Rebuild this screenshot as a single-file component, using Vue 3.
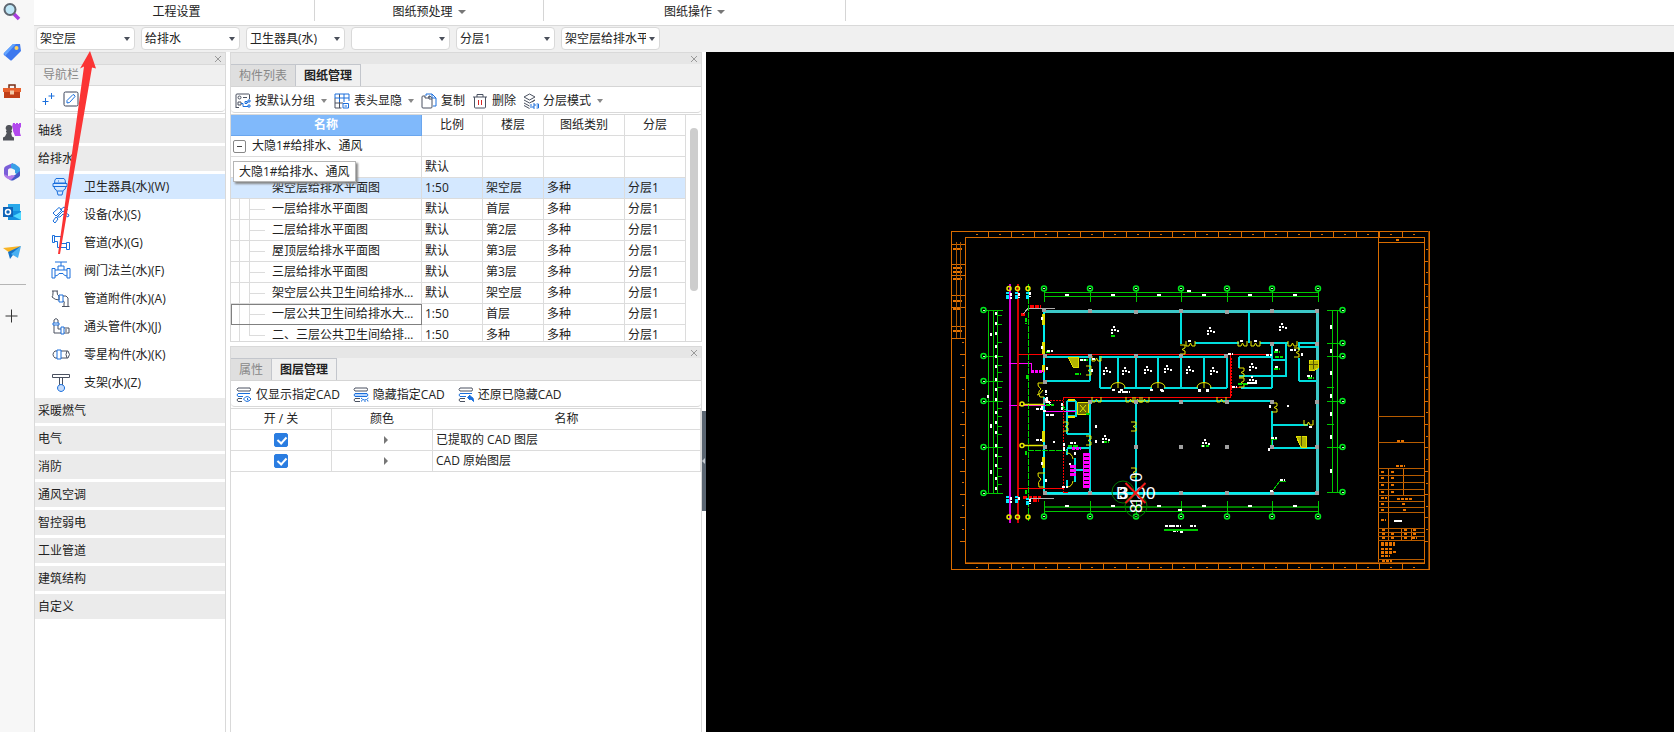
<script setup>
import { ref } from 'vue'

const groups = [
  { name: '工程设置', menu: false, size: 'g1' },
  { name: '图纸预处理', menu: true, size: 'g2' },
  { name: '图纸操作', menu: true, size: 'g3' },
]
const filters = [
  { label: '楼层', value: '架空层' },
  { label: '专业', value: '给排水' },
  { label: '构件类型', value: '卫生器具(水)' },
  { label: '构件', value: '' },
  { label: '分层', value: '分层1' },
  { label: '图纸', value: '架空层给排水平面图' },
]

const B = '#1a6fdc'
const K = '#4a5160'
const navIcons = {
  toilet: [['M5 1.500h8q1.500 1 1.500 4.500h-11Q3.500 2.500 5 1.500zM2 6.500h14v3H2zM3 9.500q0 3 3.500 4.500h5q3.500-1.500 3.500-4.500M6 14l1 4h4l1-4', B], ['M7 4h1', B]],
  device: [['M2 8l6-5.500 3 2.500-6 6zM6 12l6-6 6 4-1 2-5-3-3 3zM2 16l3-4 2 2-3 4zM9 5l4-3 4 3', B]],
  pipe: [['M1.500 2.500h2v7h-2zM3.500 3.500h6.500v7h5.500M3.500 8.500h3v6h9M15.500 9.500h3v7h-3z', B]],
  valve: [['M4 1h12M10 1v4M7 5h6v4H7zM1 7.500h3v9.500H1zM16 7.500h3V17h-3zM4 9h3M13 9h3M4 15q3 0 4-2.500h4q1 2.500 4 2.500', B]],
  fitting: [['M1 2h6M2 2v2q0 3-1 4 3 3 7 3V7Q6 7 6 2M12 7h3q3 1 2 6v4M12 12q2 0 1 3v2M11 17.500h7.500', K], ['M8 6h4v7H8z', B]],
  elbow: [['M3 6V3q2-3 4 0v3M3 8v8h7M7 8v4h3M13 11h5v5h-5M15 12v3', K], ['M2 6h6v2H2zM10 10h3v7h-3z', B]],
  part: [['M6 6H4q-4 3.500 0 7h2M10 6h7q3 3.500 0 7h-7M16 6q-2 3.500 0 7', K], ['M6 5h4v9H6z', B]],
  bracket: [['M1.500 1.500h17v3h-17zM8.500 4.500v8M11.500 4.500v8', K], ['M10 11.500a3.500 3.500 0 1 0 .1 0z', B, '#c6dcfb']],
}
const navItems = [
  ['toilet', '卫生器具(水)(W)'], ['device', '设备(水)(S)'], ['pipe', '管道(水)(G)'], ['valve', '阀门法兰(水)(F)'],
  ['fitting', '管道附件(水)(A)'], ['elbow', '通头管件(水)(J)'], ['part', '零星构件(水)(K)'], ['bracket', '支架(水)(Z)'],
]
const navTop = ['轴线', '给排水']
const navRest = ['采暖燃气', '电气', '消防', '通风空调', '智控弱电', '工业管道', '建筑结构', '自定义']

const toolIcons = {
  group: [['M1 15V2q0-1 1-1h11.500q1 0 1 1v4M1 14.500h3', K], ['M3 4.500a1.500 1.500 0 1 0 3 0a1.500 1.500 0 1 0-3 0M8 4.500h4M3 9h3v3H3z', K], ['M6 10.500h2v3h5M10 8.500h2v2h-2zM13 7h2v2h-2zM13 12h2v2h-2zM12 9.500h1', B]],
  columns: [['M1 15V5M5.500 15V1M1 10h8M1 15h6.500', K], ['M1 1h14v4H1zM10 1v8M15 5v3M5.500 5v4', B], ['M9 10.500h5.500v4.500H9zM10.500 13h2.500', B]],
  copy: [['M5 3V1h6l4 4v8h-3', B], ['M11 1v4h4', B], ['M1 4q0-1 1-1h2v2h4V3h1l2 2.500V14q0 1-1 1H2q-1 0-1-1zM8 3v3h3', K]],
  trash: [['M1 4h14M5 4V1.500h6V4M2.500 4v10q0 1 1 1h9q1 0 1-1V4', K], ['M6.500 7v5M9.500 7v5', '#d62828']],
  layers: [['M1 4l5.500-3L12 4 6.500 7zM1 7l5.500 3L12 7M1 10l5.500 3M1 12.500l5.500 3M9 9l3-2', K], ['M8 11v4M10 11h2v2h-2v2h2M13.500 11h2v4h-2M13.500 13h2', B]],
  show: [['M2 1h12q1 1.500 0 3H2Q0 2.500 2 1zM6 14.500H2q-2-1.500 0-3h4', K], ['M7 9.500H2Q0 8 2 6.500h12', B], ['M7.500 12q3.500-5 7.500 0-4 5-7.500 0zM11.500 11v2h1', B]],
  hide: [['M2 1h12q1 1.500 0 3H2Q0 2.500 2 1zM7 14.500H2q-2-1.500 0-3h5', K], ['M2 6.500h12q2 1.500 0 3H2Q0 8 2 6.500z', B, '#b9d5fb'], ['M8 11q3.500 4 7.500 0M9 13l-.500 1.500M12 13.500V15M14.500 13l.500 1.500', B]],
  restore: [['M2 1h12q1 1.500 0 3H2Q0 2.500 2 1zM7 14.500H2q-2-1.500 0-3h5', K], ['M14 6.500H2Q0 8 2 9.500h6', B], ['M9.500 10.500L12 8v1.500q4 .500 3.500 5-1.500-2.500-3.500-2.500V13z', B, B]],
}
const drawingTools = [
  { icon: 'group', label: '按默认分组', menu: true },
  { icon: 'columns', label: '表头显隐', menu: true },
  { icon: 'copy', label: '复制' },
  { icon: 'trash', label: '删除' },
  { icon: 'layers', label: '分层模式', menu: true },
]
const layerTools = [
  { icon: 'show', label: '仅显示指定CAD' },
  { icon: 'hide', label: '隐藏指定CAD' },
  { icon: 'restore', label: '还原已隐藏CAD' },
]

const drawings = [
  ['架空层给排水平面图', '1:50', '架空层', '多种', '分层1'],
  ['一层给排水平面图', '默认', '首层', '多种', '分层1'],
  ['二层给排水平面图', '默认', '第2层', '多种', '分层1'],
  ['屋顶层给排水平面图', '默认', '第3层', '多种', '分层1'],
  ['三层给排水平面图', '默认', '第3层', '多种', '分层1'],
  ['架空层公共卫生间给排水大样图', '默认', '架空层', '多种', '分层1'],
  ['一层公共卫生间给排水大样图', '1:50', '首层', '多种', '分层1'],
  ['二、三层公共卫生间给排水大样图', '1:50', '多种', '多种', '分层1'],
]
const layers = ref([
  { name: '已提取的 CAD 图层', on: true },
  { name: 'CAD 原始图层', on: true },
])

// ---- CAD plan ----
const range = (n, f) => Array.from({ length: n }, (_, i) => f(i))
const axisX = [1044, 1090, 1136, 1181, 1227, 1272, 1318]
const axisLeft = [310, 356, 381, 401, 447, 493]
const axisRight = [310, 343, 356, 401, 447, 492]
const frameTicks =
  range(19, i => `M${988.5 + 23 * i} 231v6M${988.5 + 23 * i} 564v6`).join('') +
  range(13, i => `M1424 ${Math.round(260.5 + 23.35 * i)}h6`).join('') +
  range(9, i => `M960 ${Math.round(354 + 23.35 * i)}h5`).join('')
const frameMarks =
  range(20, i => `M${976 + 23 * i} 234.500h2M${976 + 23 * i} 567h2`).join('') +
  range(13, i => `M1426 ${Math.round(249 + 23.35 * i)}h2`).join('') +
  range(9, i => `M962 ${Math.round(342 + 23.35 * i)}h2`).join('')
const titleRows = [416, 442, 468, 475, 482, 489, 495, 501, 507, 512, 528, 532, 536, 540, 559]
const titleBlock = titleRows.map(y => `M1378 ${y}.500h46`).join('')
const sideTable = [244, 264, 275, 295, 307, 326, 338].map(y => `M951 ${y}.500h14`).join('')
const axes =
  axisX.map(x => `M${x} 291v11M${x} 501v14`).join('') +
  axisLeft.map(y => `M986 ${y}h17`).join('') +
  axisRight.map(y => `M1327 ${y}h13`).join('') +
  [315, 324, 342, 365, 372, 387, 408, 416, 426, 434, 456, 468, 476, 484].map(y => `M997 ${y}.500h5`).join('') +
  'M1327 387h7M1327 424h7'
const bubbles = [
  ...axisX.flatMap(x => [[x, 288.5], [x, 516.5]]),
  ...axisLeft.map(y => [983.5, y]),
  ...axisRight.map(y => [1342.5, y]),
]
const pipeBubbles = [1009, 1017.5, 1028].flatMap(x => [[x, 288.5], [x, 517]]).concat([[1022, 404], [1022, 445.5]])
const dims =
  axisX.slice(0, 6).map(x => `M${x + 21} 295h4M${x + 21} 505.500h4`).join('') +
  range(17, i => `M996 ${312 + i * 11 - (i % 3)}v3`).join('') +
  [325, 349, 371, 394, 412, 435, 469].map(y => `M1331 ${y}v4`).join('') +
  'M991 333v3M988 395v3M991 424v4M991 470v4M1187 291h4M1178 510h4'
const walls =
  'M1044 356.500h46M1090 356v25M1044 381h46' +
  'M1099 357h128M1100 357v31M1118 357v26M1136 357v31M1158 357v26M1181 357v31M1204 357v26M1227 357v31' +
  'M1100 388h11M1124 388h28M1164 388h34M1210 388h17' +
  'M1181 311v33M1195 343h44M1260 343h28M1298 343h20M1249 311v32' +
  'M1272 343v45M1286 343v33M1272 359.500h14M1239 375.500h48M1241 388h31M1239 356.500h33M1239 357v11' +
  'M1299 343v7M1299 358v23M1299 381h18M1299 347h19' +
  'M1090 401h182M1090 401v92M1135.500 401v92M1067 401v33M1067 434h23M1067 401h9M1067 416h10M1076 401v15M1067 411h9' +
  'M1067 447.500h23M1075 458v24M1067 449v6M1067 480v7M1075 470h15' +
  'M1272 411v36M1272 424.500h36M1272 447.500h45'
const columns = [
  [1044, 310], [1090, 311], [1136, 312], [1181, 311], [1227, 312], [1272, 311], [1317, 311],
  [1045, 356], [1090, 356], [1136, 356], [1181, 356], [1226, 356], [1272, 344], [1317, 344], [1045, 382],
  [1045, 401], [1090, 402], [1136, 402], [1181, 402], [1227, 402], [1272, 402], [1317, 402],
  [1045, 447], [1136, 447], [1181, 447], [1227, 447], [1272, 447], [1317, 447],
  [1045, 493], [1090, 493], [1181, 493], [1227, 493], [1272, 493], [1317, 493],
]
const doorH = (x, y) => `M${x} ${y - 2}v5h3l1.500-3 1.500 3h3v-5`
const doorV = (x, y) => `M${x} ${y}h5v3l-3 1.500 3 1.500v3h-5`
const doors =
  [[1186, 343], [1238, 343], [1251, 343], [1288, 343], [1092, 399], [1126, 399], [1133, 399], [1140, 399], [1217, 399], [1304, 422], [1092, 358]].map(d => doorH(...d)).join('') +
  [[1180, 345], [1086, 366], [1063, 422], [1086, 436], [1131, 422], [1131, 468], [1272, 403], [1294, 348], [1239, 368], [1239, 378]].map(d => doorV(...d)).join('') +
  'M1045 383h-7q-1 3 3 6-4 3-1 8h4M1045 473h-7q-1 4 3 6-4 3-2 8h5M1043 390q-3 5-6 5' +
  [1118, 1158, 1204].map(x => `M${x - 7} 388q0-5 7-5.500q7 .500 7 5.500M${x} 382v6`).join('') +
  'M1067 453q5 0 6 6M1067 487q5 0 6-6'
const rooms = [
  [1113, 330], [1209, 331], [1281, 327], [1105, 371], [1124, 371], [1146, 370], [1166, 369], [1188, 370], [1212, 371],
  [1251, 367], [1251, 380], [1104, 439], [1204, 443],
]
const roomText = rooms.map(([x, y]) => `M${x} ${y - 3}h3M${x - 2} ${y}h5M${x - 2} ${y + 2.5}h3M${x + 4} ${y + 1}h1.500`).join('')
const notes =
  'M1042 317v4M1042 346v4M1047 351h6M1047 367v4M1046 390v5M1080 360h6M1092 359h4M1092 369v3M1112 390h3M1120 390h3M1150 390h3M1160 390h3M1198 390h3M1206 390h3' +
  'M1188 341h3M1240 341h4M1254 341h4M1290 350h6M1302 353v4M1307 376h5M1266 355h6M1228 354h5M1232 387h5M1247 383h10M1275 350h4M1275 367h4' +
  'M1062 403v7M1036 409h7M1046 415h8M1036 440h6M1053 442h2M1064 443v8M1070 443h6M1069 464h2M1075 452v4M1062 487h6M1042 462v3M1046 479v4M1096 425v3M1096 440v3' +
  'M1047 397v6M1042 406v4M1043 411h4M1045 399l6 5M1118 392h12M1161 391h3M1198 391h3M1206 391h3M1270 405v4M1287 406h2M1309 427h4M1271 438h6M1269 448v3M1280 480h5M1270 491h4M1165 526h16M1190 526h6M1173 531h5M1180 532h4'
const greenNotes =
  'M1111 336h5M1103 442h6M1201 446h8M1075 374h6M1080 360h8M1274 352h6M1274 369h6M1308 378h6M1046 352h4M1026 318v6M1027 375v5M1026 451v5M1026 490v5M1275 357h8M1046 405h8M1068 446h10M1238 384h10M1062 405l3 5M1086 414h4'
const orangeNotes =
  'M953 249h9M953 268h9M953 272h9M953 279h9M953 301h9M953 309h8M953 331h9M1396 240h4M1397 441h8M1396 466h9' +
  'M1381 472h4M1391 472h4M1381 478h4M1391 478h4M1381 485h4M1391 485h4M1381 492h4M1391 492h4M1381 498h6M1397 499h15M1381 504h4M1402 504h4M1381 510h4M1403 510h3M1381 520h5' +
  'M1382 530h4M1404 530h4M1413 530h4M1382 534h4M1391 534h3M1404 534h4M1413 534h4M1382 538h4M1391 538h3M1404 538h4M1412 538h5' +
  'M1381 543h14M1381 545h14M1381 549h12M1381 552h15M1381 553h12M1381 556h9M1382 561h10'
</script>

<template>
  <div class="app">
    <aside class="dock">
      <button class="dock-btn" aria-label="搜索">
        <svg viewBox="0 0 18 18"><path d="M11 11l5 5" stroke="#a93de0" stroke-width="3.500" /><circle cx="7" cy="6.500" r="5.500" fill="#bde6f7" stroke="#5d6670" stroke-width="2" /></svg>
      </button>
      <button class="dock-btn" aria-label="购物">
        <svg viewBox="0 0 18 18"><path d="M10 1h7l1 7-9 9q-1 1-2 0L1 12q-1-1 0-2z" fill="#3d78ee" /><path d="M1 10l9-9h3L2 13z" fill="#62a4ff" /><circle cx="13.500" cy="5" r="2" fill="#ffd25c" /></svg>
      </button>
      <button class="dock-btn" aria-label="工具">
        <svg viewBox="0 0 18 18"><path d="M6 5V2h6v3" fill="none" stroke="#7a2d14" stroke-width="1.500" /><path d="M0 5h18v4H0z" fill="#e8602c" /><path d="M1 9h16v6H1z" fill="#c13f18" /><path d="M7 7.500h4v4H7z" fill="#f2c9a8" /></svg>
      </button>
      <button class="dock-btn" aria-label="游戏">
        <svg viewBox="0 0 18 18"><path d="M10 0h2v1h1V0h2v1h1V0h2v4l-1 1v5l1 3h-6l-2-5V5l-1-1z" fill="#b348ee" /><path d="M6 2a3 3 0 0 1 2 5.500H9v2H8l1 4 2 1v3H0v-3l2-1 2-4H3v-2h1A3 3 0 0 1 6 2z" fill="#50535a" /></svg>
      </button>
      <button class="dock-btn" aria-label="Microsoft 365">
        <svg viewBox="0 0 18 18"><path d="M10 0L3 3Q1 4 1 6v6l4 2V7q0-2 5-2z" fill="#7a5fd8" /><path d="M8 1q2-1 4 0l4 3q1 1 1 2v7l-5-3V7L8 5z" fill="#3aa0e8" /><path d="M17 8v4q0 1-1 2l-5 3q-2 1-4 0l-2-2 7-3z" fill="#4458c8" /><path d="M1 11l4 2q2 0 4-1l3 1-4 4Q1 15 1 11z" fill="#b17bea" /></svg>
      </button>
      <button class="dock-btn" aria-label="Outlook">
        <svg viewBox="0 0 18 18"><path d="M5 1h12v10H5z" fill="#28a8ea" /><path d="M5 8h13v9H5z" fill="#1490df" /><path d="M10 13l8-4v8z" fill="#50d9ff" /><path d="M0 4h10v10H0z" fill="#0f64b8" /><circle cx="5" cy="9" r="2.500" fill="none" stroke="#fff" stroke-width="1.500" /></svg>
      </button>
      <button class="dock-btn" aria-label="发送">
        <svg viewBox="0 0 18 18"><path d="M0 5l18-2-11 7z" fill="#f8b425" /><path d="M18 3L5 9l2 7 3-4z" fill="#1673c8" /><path d="M18 3l-3 12-7-4z" fill="#49b0f2" /></svg>
      </button>
      <hr class="dock-line">
      <button class="dock-btn" aria-label="添加"><svg viewBox="0 0 18 18"><path d="M8.500 2.500v13M2.500 9h12" stroke="#333" /></svg></button>
    </aside>

    <div class="work">
      <header class="ribbon">
        <button v-for="g in groups" :key="g.name" class="ribbon-group" :class="g.size">{{ g.name }}<i v-if="g.menu" class="caret big" /></button>
      </header>
      <div class="filters">
        <label v-for="f in filters" :key="f.label" class="filter">
          <select :aria-label="f.label"><option>{{ f.value }}</option></select>
          <i class="caret" />
        </label>
      </div>

      <div class="main">
        <nav class="panel nav">
          <div class="strip"><button class="close" aria-label="关闭"><svg viewBox="0 0 8 8"><path d="M1 1l6 6M7 1L1 7" /></svg></button></div>
          <h2 class="nav-title">导航栏</h2>
          <div class="bar nav-bar">
            <button aria-label="新建"><svg class="ic" viewBox="0 0 16 16" fill="none" stroke="#1a6fdc"><path d="M10.500 2v6M7.500 5h6M4.500 7v7M1.500 10.500h6" /></svg></button>
            <button aria-label="编辑"><svg class="ic" viewBox="0 0 16 16" fill="none"><rect x="1" y="1" width="14" height="14" rx="1.500" stroke="#3a4358" /><path d="M4 12v-2.500L10 3.500q1.500 0 2 2L6.500 11.500z" stroke="#1a6fdc" /></svg></button>
          </div>
          <div class="nav-list">
            <button v-for="n in navTop" :key="n" class="cat">{{ n }}</button>
            <button v-for="([icon, label], i) in navItems" :key="label" class="item" :class="{ sel: i === 0 }">
              <svg class="nav-ic" viewBox="0 0 20 19"><path v-for="(p, k) in navIcons[icon]" :key="k" :d="p[0]" :stroke="p[1]" :fill="p[2] || 'none'" /></svg>
              {{ label }}
            </button>
            <button v-for="n in navRest" :key="n" class="cat">{{ n }}</button>
          </div>
        </nav>

        <div class="middle">
          <section class="panel drawings">
            <div class="strip"><button class="close" aria-label="关闭"><svg viewBox="0 0 8 8"><path d="M1 1l6 6M7 1L1 7" /></svg></button></div>
            <div class="tabs"><button>构件列表</button><button class="on">图纸管理</button></div>
            <div class="bar tool-bar">
              <button v-for="t in drawingTools" :key="t.label" class="tool">
                <svg class="ic" viewBox="0 0 16 16"><path v-for="(p, k) in toolIcons[t.icon]" :key="k" :d="p[0]" :stroke="p[1]" :fill="p[2] || 'none'" /></svg>
                {{ t.label }}<i v-if="t.menu" class="caret pale" />
              </button>
            </div>
            <div class="sheet">
              <table class="grid">
                <colgroup><col class="c-name"><col class="c-ratio"><col class="c-floor"><col class="c-kind"><col class="c-layer"></colgroup>
                <thead><tr><th class="active">名称</th><th>比例</th><th>楼层</th><th>图纸类别</th><th>分层</th></tr></thead>
                <tbody>
                  <tr>
                    <td class="root"><div class="node"><button class="fold" aria-label="折叠"><i /></button>大隐1#给排水、通风</div></td><td /><td /><td /><td />
                  </tr>
                  <tr>
                    <td class="branch"><div class="node"><button class="fold" aria-label="折叠"><i /></button></div><span class="tip" role="tooltip">大隐1#给排水、通风</span></td>
                    <td>默认</td><td /><td /><td />
                  </tr>
                  <tr v-for="(d, i) in drawings" :key="d[0]" :class="{ sel: i === 0, focus: i === 6 }">
                    <td class="leaf" :class="{ last: i === 7 }">{{ d[0] }}</td><td v-for="k in 4" :key="k">{{ d[k] }}</td>
                  </tr>
                </tbody>
              </table>
              <div class="scroll"><div class="thumb" /></div>
            </div>
          </section>

          <section class="panel layers">
            <div class="strip"><button class="close" aria-label="关闭"><svg viewBox="0 0 8 8"><path d="M1 1l6 6M7 1L1 7" /></svg></button></div>
            <div class="tabs"><button>属性</button><button class="on">图层管理</button></div>
            <div class="bar tool-bar bar-wide">
              <button v-for="t in layerTools" :key="t.label" class="tool">
                <svg class="ic" viewBox="0 0 16 16"><path v-for="(p, k) in toolIcons[t.icon]" :key="k" :d="p[0]" :stroke="p[1]" :fill="p[2] || 'none'" /></svg>
                {{ t.label }}
              </button>
            </div>
            <div class="layer-sheet">
              <table class="grid">
                <colgroup><col class="c-on"><col class="c-color"><col></colgroup>
                <thead><tr><th>开 / 关</th><th>颜色</th><th>名称</th></tr></thead>
                <tbody>
                  <tr v-for="l in layers" :key="l.name">
                    <td class="mid"><input v-model="l.on" type="checkbox" :aria-label="l.name"></td>
                    <td class="mid"><i class="expander" /></td>
                    <td>{{ l.name }}</td>
                  </tr>
                </tbody>
              </table>
            </div>
          </section>
        </div>

        <div class="splitter"><button class="grip" aria-label="收起面板"><i /></button></div>

        <main class="canvas">
          <svg class="plan" viewBox="940 220 500 360" fill="none" shape-rendering="crispEdges">
            <g stroke="#d96c00">
              <path d="M951.500 231.500h478v338h-478z" />
              <path d="M965.500 237.500h459v326h-459z" />
              <path :d="frameTicks" />
              <path d="M1378.500 231v332M1378 242.500h46M1388.500 468v72M1403.500 468v27M1401.500 528v12M1411.500 528v12" />
              <path :d="titleBlock" stroke="#b85c00" />
              <path :d="sideTable" />
              <path d="M956.500 242v96M960.500 242v96" stroke="#a85400" />
              <path d="M1428.500 231v338M966 562.500h458" stroke="#804000" />
            </g>
            <path :d="frameMarks" stroke="#d96c00" />
            <path :d="orangeNotes" stroke="#e87400" stroke-width="2" stroke-dasharray="3 1" />
            <path d="M1394 521h8" stroke="#fff" stroke-width="2" />

            <g stroke="#00c800">
              <path d="M1044 292.500h274M1044 296.500h274M1044 511.500h274" />
              <path d="M1044 506.500h274" stroke="#008000" stroke-width="2" />
              <path d="M988.500 310v183M993.500 310v183M997.500 310v183M1332.500 310v183M1337.500 310v183" />
              <path :d="axes" />
            </g>
            <g stroke="#00e61e" shape-rendering="auto" stroke-width="1.500">
              <circle v-for="(b, i) in bubbles" :key="i" :cx="b[0]" :cy="b[1]" r="2.500" />
            </g>
            <path v-for="(b, i) in bubbles" :key="'m' + i" :d="`M${b[0] - 1} ${b[1]}h2`" stroke="#c8ffc8" />

            <path d="M1043.500 311h275M1317.500 311v182M1043.500 493h275" stroke="#3cc8c8" stroke-width="3" />
            <path d="M1043.500 311v70M1043.500 397v96M1043.500 493h275" stroke="#00f0f0" stroke-width="2" />
            <path :d="walls" stroke="#00dede" stroke-width="2" />
            <path d="M1043.500 314v11M1043.500 342v12M1043.500 365v7M1043.500 431v11M1043.500 457v11" stroke="#e0e000" stroke-width="3" />

            <g stroke="#ff00ff">
              <path d="M1009.500 284v239" stroke="#d800d8" stroke-width="2" />
              <path d="M1009 363.500h22v8M1009 405.500h39M1045 411.500h31" />
              <path d="M1031 371.500h13M1072 448.500h9" stroke-width="3" stroke-dasharray="3 1" />
              <path d="M1086 453v35M1072.500 465v11" stroke-width="6" stroke-dasharray="3 1" />
              <path d="M1083.500 453v35M1089.500 453v35" />
            </g>
            <g stroke="#ff0000">
              <path d="M1017.500 284v239" stroke="#d00000" stroke-width="2" />
              <path d="M1018 354.500h254M1230.500 355v42M1063 397.500h168M1018 488.500h45M1063 492.500h5M1231 387.500h10" />
              <path d="M1063.500 398v94M1044 400.500h19M1231.500 358v39" stroke-dasharray="2 1" />
              <path d="M1030 306h11M1021 314h5M1023 497h18M1033 500h6" stroke-width="3" stroke-dasharray="4 1" />
            </g>
            <path d="M1023 314l5-5.500h27M1030 498.500h24" stroke="#b0b0b0" />
            <path d="M1028.500 284v238M1028 450.500h39" stroke="#00d800" stroke-dasharray="6 1" />
            <path d="M1007 292v8M1016 292v8M1027 292v8M1007 496v8M1016 496v8M1027 498v8" stroke="#00e8ff" stroke-width="3" stroke-dasharray="2 .5" />
            <path d="M1010.500 293v6M1019 293v5M1029.500 292v5M1010.500 497v6M1019 497v4M1029.500 499v5" stroke="#fff" stroke-width="2" stroke-dasharray="3 1" />
            <g stroke="#e8e800" shape-rendering="auto">
              <circle v-for="(b, i) in pipeBubbles" :key="i" :cx="b[0]" :cy="b[1]" r="2" stroke-width="1.500" />
              <path :d="doors" />
              <path d="M1024 404.500h20M1024 445.500h20" stroke-width="1.500" />
              <path d="M1077.500 402.500h11v12h-11z" fill="#6b6b00" />
              <path d="M1080 405l6 7M1086 405l-6 7" />
              <path d="M1068 400h7M1068 417h7" stroke-width="2" />
            </g>
            <path d="M1068 357h10v10h-5zM1309 360h9v8l-3 2h-6zM1296 436h10v11h-5z" fill="#b4b400" stroke="#e0e000" />
            <path d="M1309 364h9M1313 360v9M1301 436v10" stroke="#555500" />

            <rect v-for="(c, i) in columns" :key="'c' + i" :x="c[0] - 2" :y="c[1] - 2" width="4" height="4" fill="#a0a0a0" />
            <path :d="greenNotes" stroke="#00e000" stroke-width="2" stroke-dasharray="4 .5" />
            <path :d="dims" stroke="#fff" stroke-width="2" />
            <path :d="roomText" stroke="#fff" stroke-width="2" stroke-dasharray="2 .7" />
            <path :d="notes" stroke="#fff" stroke-width="2" stroke-dasharray="3 .7" />
            <path d="M1164 529.500h34" stroke="#00c800" stroke-width="2" />
            <path d="M1273 490l7-9h6M1271 445v-6h6" stroke="#00c800" />

            <g shape-rendering="auto">
              <circle cx="1123" cy="492" r="11" stroke="#007800" />
              <circle cx="1136" cy="506" r="11" stroke="#007800" />
              <g class="coord">
                <text x="1116" y="499">B</text>
                <text x="1119" y="499">3</text>
                <text x="1136" y="499">0</text>
                <text x="1146" y="499">0</text>
                <g transform="rotate(-90 1142 482)">
                  <text x="1142" y="482">0</text>
                  <text x="1111" y="482">8</text>
                  <text x="1118" y="482">1</text>
                </g>
              </g>
              <path d="M1125.500 483l20 20M1145.500 483l-20 20" stroke="#f01818" stroke-width="2" />
            </g>
          </svg>
        </main>
      </div>
    </div>

    <svg class="pointer" viewBox="0 0 44 206" aria-hidden="true"><path d="M35 1L41 18.500 37 17.500 5 204H3L29 16.500 25 18.500z" fill="#fb3434" /></svg>
  </div>
</template>

<style>
body { background: #fff; }
</style>

<style scoped>
.app { position: relative; display: flex; height: 100vh; overflow: hidden; background: #fff; color: #222; font: 12px/16px "Open Sans", "Noto Sans CJK SC", sans-serif; }
.app * { box-sizing: border-box; }
button { margin: 0; padding: 0; border: 0; background: none; color: inherit; font: inherit; white-space: nowrap; }
svg { display: block; flex: none; }

.dock { display: flex; flex-direction: column; gap: 22px; flex: none; width: 34px; padding: 3px 0 0 3px; background: #f7f7f7; }
.dock-btn, .dock-btn svg { width: 18px; height: 18px; }
.dock-btn svg { fill: none; }
.dock-line { width: 26px; margin: 1px 0 0 -3px; border: 0; border-top: 1px solid #b5b5b5; }

.work { display: flex; flex-direction: column; flex: 1; min-width: 0; }
.ribbon { display: flex; align-items: flex-start; height: 26px; border-bottom: 1px solid #d9d9d9; background: #fff; }
.ribbon-group { display: flex; align-items: center; justify-content: center; gap: 5px; height: 21px; padding-top: 2px; border-right: 1px solid #d5d5d5; }
.g1 { width: 281px; padding-left: 5px; }
.g2 { width: 229px; }
.g3 { width: 302px; }
.caret { flex: none; width: 0; height: 0; border: 3px solid transparent; border-top: 4px solid #4a4f5a; border-bottom: 0; }
.caret.big { border-width: 4px; border-top-color: #777; border-bottom: 0; }
.caret.pale { border-top-color: #888; margin-left: 2px; }

.filters { display: flex; gap: 6px; height: 26px; padding: 1px 2px 2px; background: #f0f0f0; }
.filter { display: grid; width: 99px; }
.filter > * { grid-area: 1 / 1; }
.filter select { appearance: none; width: 100%; height: 23px; padding: 0 13px 0 3px; border: 1px solid #d9d9d9; border-radius: 4px; background: #fff; color: #222; font: inherit; }
.filter .caret { align-self: center; justify-self: end; margin-right: 5px; pointer-events: none; }

.main { display: flex; flex: 1; min-height: 0; }
.panel { display: flex; flex-direction: column; border: solid #d9d9d9; border-width: 1px 1px 0; background: #fff; }
.strip { display: flex; justify-content: flex-end; align-items: center; flex: none; height: 11px; padding-right: 3px; background: #e6e6e6; }
.close svg { width: 8px; height: 8px; stroke: #999; }
.nav { flex: none; width: 192px; margin-right: 4px; }
.nav-title { margin: 0; height: 22px; padding: 2px 8px; border: solid #d9d9d9; border-width: 1px 0; background: #f0f0f0; color: #888; font: inherit; }
.bar { display: flex; align-items: center; gap: 7px; flex: none; height: 26px; padding: 0 4px; border-bottom: 1px solid #d9d9d9; border-radius: 0 0 4px 4px; }
.tool-bar { padding-top: 3px; }
.nav-bar { gap: 6px; padding: 0 6px; }
.ic { width: 16px; height: 16px; }
.nav-list { display: flex; flex-direction: column; gap: 3px; border-top: 1px solid #d9d9d9; margin-top: 1px; padding-top: 4px; }
.cat, .item { display: flex; align-items: center; height: 25px; padding-left: 3px; background: #ebebeb; }
.item { gap: 13px; padding-left: 16px; background: #fff; }
.item.sel { background: #d4e8ff; }
.nav-ic { width: 20px; height: 19px; }

.middle { display: flex; flex-direction: column; gap: 4px; flex: none; width: 472px; }
.drawings { border-bottom-width: 1px; }
.layers { flex: 1; }
.tabs { display: flex; flex: none; height: 23px; border-bottom: 1px solid #d5d5d5; background: #f0f0f0; }
.tabs button { height: 22px; padding: 0 8px; border: solid #c3c6cc; border-width: 1px 1px 0 0; background: #dfdfdf; color: #888; }
.tabs button.on { background: #f0f0f0; color: #222; font-weight: 600; }
.tool { display: flex; align-items: center; gap: 4px; }
.bar-wide { gap: 13px; padding-left: 5px; }

.sheet { display: flex; height: 227px; margin-top: 1px; overflow: hidden; border-top: 1px solid #d9d9d9; }
.grid { table-layout: fixed; flex: 1; border-spacing: 0; width: 100%; }
.sheet .grid { width: 455px; align-self: flex-start; }
.c-name { width: 191px; }
.c-ratio, .c-floor, .c-layer { width: 61px; }
.c-kind { width: 81px; }
.c-on { width: 101px; }
.c-color { width: 101px; }
.grid th, .grid td { height: 21px; padding: 0 3px; border: solid #dcdcdc; border-width: 0 1px 1px 0; overflow: hidden; text-overflow: ellipsis; white-space: nowrap; font-weight: 400; line-height: 20px; text-align: left; }
.grid th { text-align: center; }
.grid th.active { background: #80b9fb; border-color: #6aa6ee; color: #fff; font-weight: 600; }
.grid tr.sel td { background: #d4e8ff; }
.grid td.leaf { padding-left: 41px; padding-right: 4px; background-image: linear-gradient(#dcdcdc, #dcdcdc), linear-gradient(#dcdcdc, #dcdcdc), linear-gradient(#dcdcdc, #dcdcdc); background-repeat: no-repeat; background-size: 1px 100%, 1px 100%, 16px 1px; background-position: 8px 0, 18px 0, 18px 10px; }
.grid td.leaf.last { background-size: 1px 100%, 1px 10px, 16px 1px; }
.grid tr.sel td.leaf { background-size: 1px 100%, 1px 100%, 0 0; }
.grid tr.focus td.leaf { outline: 1px solid #808080; outline-offset: -1px; }
.grid td.root, .grid td.branch { padding-left: 2px; }
.node { display: flex; align-items: center; gap: 6px; height: 20px; }
.fold { display: flex; align-items: center; justify-content: center; width: 13px; height: 13px; border: 1px solid #888; border-radius: 2px; }
.fold i { width: 5px; height: 1px; background: #444; }
.branch .fold { margin-left: 10px; }
.tip { position: absolute; left: 233px; top: 161px; z-index: 2; padding: 0 5px; border: 1px solid #b5b5b5; background: #fff; box-shadow: 2px 2px 2px #888; line-height: 19px; }
.scroll { flex: 1; padding: 13px 3px 0 4px; }
.thumb { height: 163px; border-radius: 4px; background: #cdcdcd; }

.layer-sheet { margin-top: 1px; border-top: 1px solid #d9d9d9; }
.grid td.mid { text-align: center; }
.mid input { appearance: none; display: block; width: 14px; height: 14px; margin: 0 auto; border-radius: 2px; background: #fff; border: 1px solid #2a7de1; }
.mid input:checked { background: #2a7de1; }
.mid input:checked::after { content: ""; display: block; width: 4px; height: 7px; margin: 1px 0 0 4px; border: solid #fff; border-width: 0 2px 2px 0; transform: rotate(42deg); }
.expander { display: inline-block; margin-left: 8px; border: 4px solid transparent; border-left-color: #777; border-right: 0; }

.splitter { display: flex; flex-direction: column; flex: none; width: 4px; padding-top: 359px; }
.grip { display: flex; align-items: center; height: 100px; background: #5b6672; }
.grip i { border: 3px solid transparent; border-left: 0; border-right-color: #c5cad0; }

.canvas { display: flex; align-items: center; justify-content: center; flex: 1; min-width: 0; padding-top: 16px; background: #000; }
.plan { width: 500px; height: 360px; }
.coord { fill: #fff; font: 17px "Liberation Sans", sans-serif; }
.pointer { position: absolute; left: 55px; top: 50px; width: 44px; height: 206px; pointer-events: none; }
</style>
